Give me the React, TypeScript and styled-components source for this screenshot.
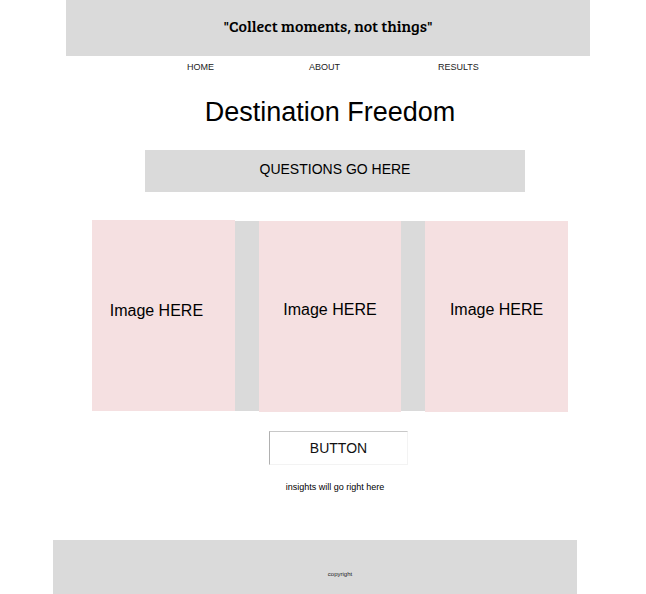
import React from "react";
import styled, { createGlobalStyle } from "styled-components";

const GlobalStyle = createGlobalStyle`
  *, *::before, *::after { box-sizing: border-box; }
  body {
    margin: 0;
    background: #fff;
    color: #000;
    font-family: "Liberation Sans", Arial, sans-serif;
  }
`;

const Page = styled.div`
  display: flex;
  flex-direction: column;
  min-height: 100vh;
`;

const Banner = styled.header`
  display: flex;
  justify-content: center;
  margin: 0 56px 0 66px;
  padding: 14px 0 18px;
  background: #dadada;
`;

const Motto = styled.p`
  margin: 0;
  font-family: "Bree Serif", "Noto Serif", "DejaVu Serif", serif;
  font-size: 16px;
  font-weight: 400;
  line-height: 24px;
  white-space: nowrap;
`;

const Nav = styled.nav`
  display: grid;
  grid-template-columns: 122px 129px auto;
  margin: 5px 0 0 187px;
`;

const NavLink = styled.a`
  justify-self: start;
  font-size: 9px;
  line-height: 12px;
  color: #222;
  text-decoration: none;
`;

const Title = styled.h1`
  margin: 23px 0 0 14px;
  font-size: 27px;
  font-weight: 400;
  line-height: 32px;
  text-align: center;
`;

const Questions = styled.section`
  margin: 22px 121px 0 145px;
  padding: 10px 0 14px;
  background: #dadada;
  font-size: 14px;
  line-height: 18px;
  text-align: center;
`;

const Gallery = styled.section`
  display: grid;
  grid-template-columns: repeat(3, 30%);
  grid-template-rows: 190px;
  justify-content: space-between;
  margin: 29px 78px 0 92px;
  background: #dadada;
`;

const Tile = styled.div<{ $lead?: boolean }>`
  display: flex;
  align-items: center;
  justify-content: center;
  align-self: ${({ $lead }) => ($lead ? "end" : "start")};
  height: 191px;
  padding: ${({ $lead }) => ($lead ? "0 14px 10px 0" : "0 0 14px")};
  background: #f5e0e1;
  font-size: 16px;
  line-height: 20px;
`;

const Actions = styled.section`
  display: flex;
  flex-direction: column;
  align-items: center;
  gap: 16px;
  margin: 20px 0 24px;
`;

const Button = styled.button`
  margin-left: 31px;
  padding: 8px 40px 7px;
  border: 1px solid;
  border-color: #c8c8c8 #f3f3f3 #f3f3f3 #b0b0b0;
  background: #fff;
  color: #111;
  font: 14px/17px "Liberation Sans", Arial, sans-serif;
`;

const Insights = styled.p`
  margin: 0 0 0 24px;
  font-size: 9px;
  line-height: 12px;
`;

const Footer = styled.footer`
  margin: auto 69px 0 53px;
  padding: 29px 0 15px 50px;
  background: #dadada;
  color: #222;
  font-size: 6px;
  line-height: 10px;
  text-align: center;
`;

export default function App() {
  return (
    <Page>
      <GlobalStyle />
      <Banner><Motto>"Collect moments, not things"</Motto></Banner>
      <Nav>
        <NavLink href="#home">HOME</NavLink>
        <NavLink href="#about">ABOUT</NavLink>
        <NavLink href="#results">RESULTS</NavLink>
      </Nav>
      <Title>Destination Freedom</Title>
      <Questions>QUESTIONS GO HERE</Questions>
      <Gallery>
        <Tile $lead>Image HERE</Tile>
        <Tile>Image HERE</Tile>
        <Tile>Image HERE</Tile>
      </Gallery>
      <Actions>
        <Button type="button">BUTTON</Button>
        <Insights>insights will go right here</Insights>
      </Actions>
      <Footer>copyright</Footer>
    </Page>
  );
}
